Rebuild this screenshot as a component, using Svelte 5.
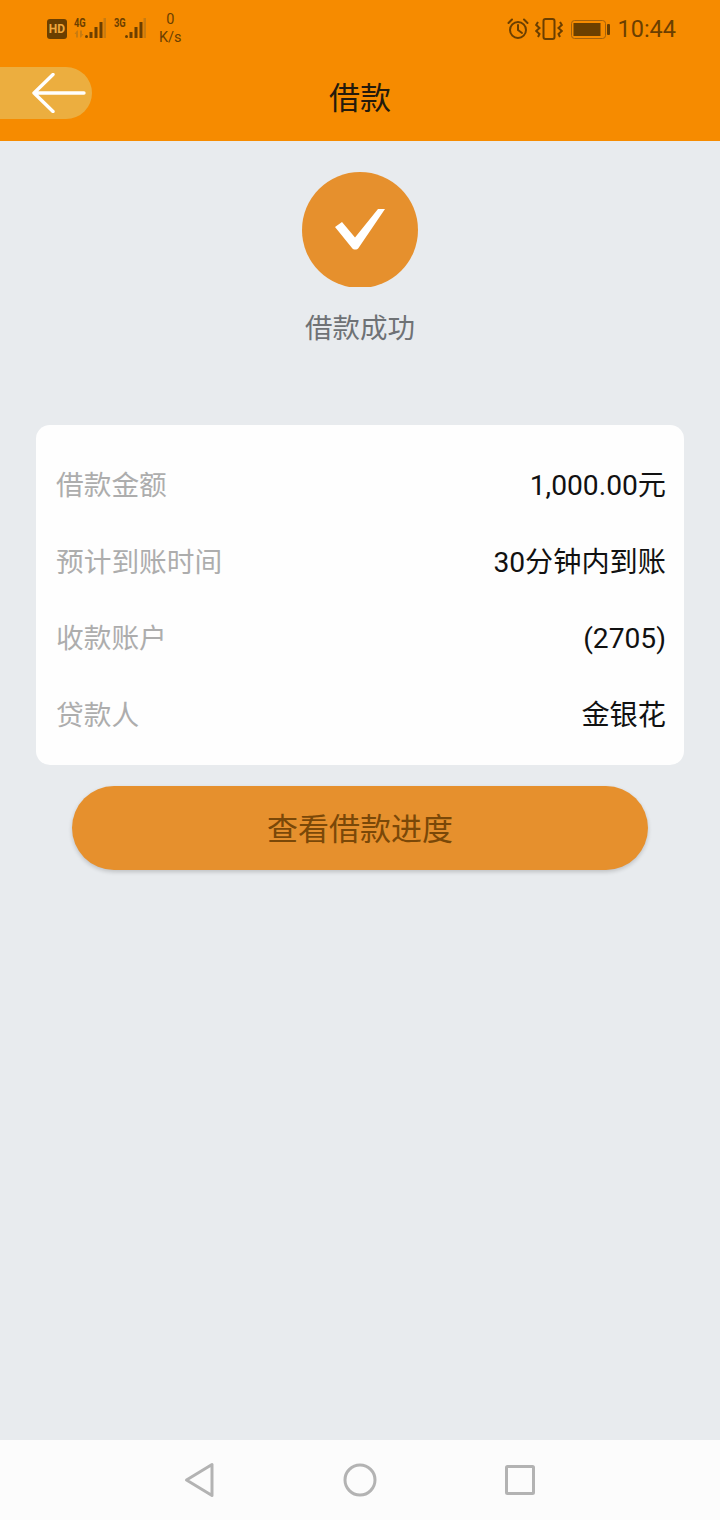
<script>
  let rows = [
    { label: "借款金额", value: "1,000.00元" },
    { label: "预计到账时间", value: "30分钟内到账" },
    { label: "收款账户", value: "(2705)" },
    { label: "贷款人", value: "金银花" },
  ];
</script>

<div class="page">
  <header class="top">
    <div class="status">
      <div class="status-left">
        <span class="hd">HD</span>
        <div class="signal">
          <span class="net">4G</span>
          <svg class="arrows" width="10" height="8" viewBox="0 0 10 8">
            <path d="M3 0.5L0.5 4H2V7.5H4V0.5ZM7 7.5L9.500 4H8V0.500H6V7.500Z" fill="#c97c10" />
          </svg>
          <svg class="bars" width="21" height="20" viewBox="0 0 21 20">
            <circle cx="1.500" cy="18.500" r="1.500" fill="#6b3f00" />
            <rect x="4.500" y="14" width="3" height="6" fill="#6b3f00" />
            <rect x="9.500" y="9" width="3" height="11" fill="#6b3f00" />
            <rect x="14.500" y="4" width="3" height="16" fill="#6b3f00" />
            <rect x="18.500" y="0" width="2.500" height="20" fill="#c97c10" />
          </svg>
        </div>
        <div class="signal three">
          <span class="net">3G</span>
          <svg class="bars" width="21" height="20" viewBox="0 0 21 20">
            <circle cx="1.500" cy="18.500" r="1.500" fill="#6b3f00" />
            <rect x="4.500" y="14" width="3" height="6" fill="#6b3f00" />
            <rect x="9.500" y="9" width="3" height="11" fill="#6b3f00" />
            <rect x="14.500" y="4" width="3" height="16" fill="#6b3f00" />
            <rect x="18.500" y="0" width="2.500" height="20" fill="#c97c10" />
          </svg>
        </div>
        <div class="speed"><span>0</span><span>K/s</span></div>
      </div>
      <div class="status-right">
        <svg class="alarm" width="22" height="22" viewBox="0 0 22 22" fill="none" stroke="#6b3f00" stroke-width="2">
          <circle cx="11" cy="12" r="8" />
          <path d="M11 7V12L15 15" stroke-linecap="round" />
          <path d="M1.500 5L5 1.500M20.500 5L17 1.500" stroke-linecap="round" />
        </svg>
        <svg class="vibrate" width="28" height="22" viewBox="0 0 28 22" fill="none" stroke="#6b3f00" stroke-width="2">
          <rect x="8.500" y="1" width="11" height="20" rx="2" />
          <path d="M3 4L1.200 7L4.500 10L1.200 13L4.500 16L3 19M25 4L26.800 7L23.500 10L26.800 13L23.500 16L25 19" />
        </svg>
        <svg class="battery" width="40" height="20" viewBox="0 0 40 20">
          <rect x="0.500" y="1.500" width="34" height="18" rx="3" fill="none" stroke="#a5620c" />
          <rect x="2.500" y="4" width="27" height="13" fill="#6b3f00" />
          <rect x="36" y="5" width="3" height="11" rx="1" fill="#6b3f00" />
        </svg>
        <span class="time">10:44</span>
      </div>
    </div>
    <div class="titlebar">
      <button class="back" aria-label="返回">
        <svg width="54" height="40" viewBox="0 0 54 40" fill="none" stroke="#fff" stroke-width="3.400" stroke-linecap="round" stroke-linejoin="round">
          <path d="M52 20H2M21 1.500L2 20L21 38.500" />
        </svg>
      </button>
      <h1>借款</h1>
    </div>
  </header>

  <main class="content">
    <div class="result">
      <div class="circle">
        <svg width="52" height="42" viewBox="0 0 52 42">
          <path d="M8 13L21 28.500L44 0H51L24.500 39C23 41 19.500 41 18 39L1 18Z" fill="#fff" />
        </svg>
      </div>
      <p>借款成功</p>
    </div>

    <div class="card">
      {#each rows as row}
        <div class="row">
          <span class="label">{row.label}</span>
          <span class="value">{row.value}</span>
        </div>
      {/each}
    </div>

    <button class="progress">查看借款进度</button>
  </main>

  <nav class="navbar">
    <svg width="32" height="36" viewBox="0 0 32 36" fill="none" stroke="#b3b3b3" stroke-width="3" stroke-linejoin="round">
      <path d="M2.500 18L28 2.500V33.500Z" />
    </svg>
    <svg width="34" height="34" viewBox="0 0 34 34" fill="none" stroke="#b3b3b3" stroke-width="3">
      <circle cx="17" cy="17" r="15" />
    </svg>
    <svg width="30" height="30" viewBox="0 0 30 30" fill="none" stroke="#b3b3b3" stroke-width="3" stroke-linejoin="round">
      <rect x="1.500" y="1.500" width="27" height="27" rx="1" />
    </svg>
  </nav>
</div>

<style>
  :global(body) {
    margin: 0;
  }
  .page {
    width: 720px;
    height: 1520px;
    display: flex;
    flex-direction: column;
    background: #e8ebee;
    font-family: Roboto, "Noto Sans CJK SC", sans-serif;
  }
  .top {
    height: 141px;
    background: #f68b00;
    flex-shrink: 0;
  }
  .status {
    height: 58px;
    display: flex;
    justify-content: space-between;
    align-items: center;
    padding: 0 44px 0 47px;
    color: #6b3f00;
  }
  .status-left,
  .status-right {
    display: flex;
    align-items: center;
  }
  .hd {
    width: 20px;
    height: 20px;
    border-radius: 3px;
    background: #6b3f00;
    color: #f0a83c;
    font-size: 12px;
    font-weight: 700;
    line-height: 20px;
    text-align: center;
    margin-right: 7px;
  }
  .signal {
    position: relative;
    width: 32px;
    height: 20px;
    margin: 0 8px 2px 0;
  }
  .signal .net {
    position: absolute;
    left: 0;
    top: -1px;
    font-size: 13px;
    font-weight: 700;
    line-height: 12px;
    transform: scaleX(0.72);
    transform-origin: left center;
  }
  .signal .arrows {
    position: absolute;
    left: 0;
    bottom: 0;
  }
  .signal .bars {
    position: absolute;
    right: 0;
    top: 0;
  }
  .signal.three {
    margin-right: 13px;
  }
  .speed {
    display: flex;
    flex-direction: column;
    align-items: center;
    font-size: 14.500px;
    line-height: 18px;
  }
  .status-right .alarm {
    margin-right: 6px;
  }
  .status-right .vibrate {
    margin-right: 8px;
  }
  .status-right .battery {
    margin-right: 6px;
  }
  .time {
    font-size: 23.500px;
  }
  .titlebar {
    position: relative;
    height: 79px;
    display: flex;
    align-items: center;
    justify-content: center;
  }
  .titlebar h1 {
    margin: 2px 0 0;
    font-size: 31px;
    font-weight: 400;
    line-height: 40px;
    color: #241a0c;
  }
  .back {
    position: absolute;
    left: 0;
    top: 9px;
    width: 92px;
    height: 52px;
    padding: 0 0 0 32px;
    border: 0;
    border-radius: 0 26px 26px 0;
    background: #ecae3f;
    display: flex;
    align-items: center;
  }
  .content {
    flex: 1;
    display: flex;
    flex-direction: column;
    padding: 0 36px;
  }
  .result {
    display: flex;
    flex-direction: column;
    align-items: center;
    padding-top: 31px;
  }
  .circle {
    width: 116px;
    height: 116px;
    border-radius: 50%;
    background: #e6902d;
    display: flex;
    align-items: center;
    justify-content: center;
    clip-path: inset(0 0 1px 0);
  }
  .result p {
    margin: 21px 0 0;
    font-size: 27.500px;
    line-height: 40px;
    color: #6f7275;
  }
  .card {
    margin-top: 76px;
    height: 340px;
    padding: 23px 18px 10px 20px;
    box-sizing: border-box;
    background: #fefefe;
    border-radius: 14px;
    display: grid;
    grid-auto-rows: 76.500px;
  }
  .row {
    display: flex;
    justify-content: space-between;
    align-items: center;
    line-height: 40px;
  }
  .label {
    color: #adadad;
    font-size: 27.700px;
  }
  .value {
    color: #111;
    font-size: 28.200px;
  }
  .progress {
    align-self: center;
    width: 576px;
    height: 84px;
    margin-top: 21px;
    padding: 0 0 3px;
    border: 0;
    border-radius: 42px;
    background: #e6902d;
    box-shadow: 0 2px 4px rgba(0, 0, 0, 0.18);
    color: #7a4808;
    font-family: inherit;
    font-size: 31px;
  }
  .navbar {
    height: 80px;
    flex-shrink: 0;
    background: #fcfcfc;
    display: grid;
    grid-template-columns: repeat(3, 160px);
    justify-content: center;
    justify-items: center;
    align-items: center;
  }
</style>
